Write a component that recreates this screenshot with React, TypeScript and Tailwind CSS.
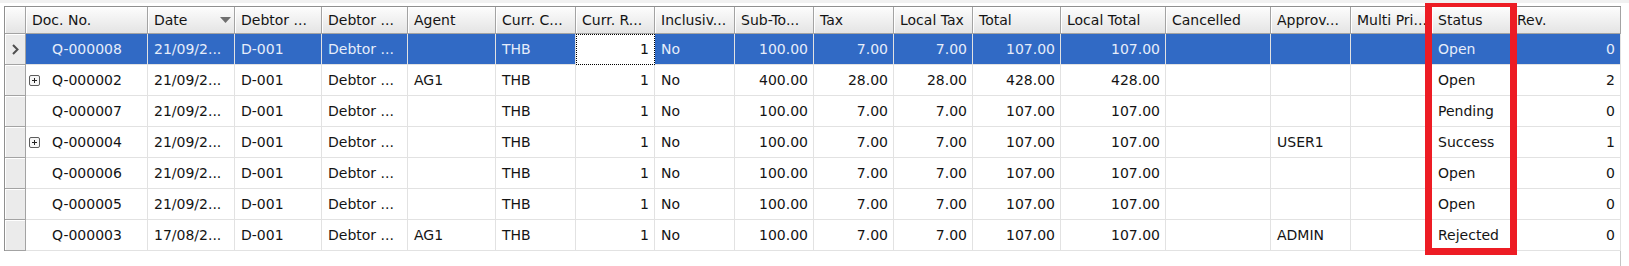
import React from "react"

type Row = {
  doc: string
  date: string
  agent: string
  sub: string
  tax: string
  total: string
  approv: string
  status: string
  rev: string
  expand?: boolean
  selected?: boolean
}

const rows: Row[] = [
  { doc: "Q-000008", date: "21/09/2...", agent: "", sub: "100.00", tax: "7.00", total: "107.00", approv: "", status: "Open", rev: "0", selected: true },
  { doc: "Q-000002", date: "21/09/2...", agent: "AG1", sub: "400.00", tax: "28.00", total: "428.00", approv: "", status: "Open", rev: "2", expand: true },
  { doc: "Q-000007", date: "21/09/2...", agent: "", sub: "100.00", tax: "7.00", total: "107.00", approv: "", status: "Pending", rev: "0" },
  { doc: "Q-000004", date: "21/09/2...", agent: "", sub: "100.00", tax: "7.00", total: "107.00", approv: "USER1", status: "Success", rev: "1", expand: true },
  { doc: "Q-000006", date: "21/09/2...", agent: "", sub: "100.00", tax: "7.00", total: "107.00", approv: "", status: "Open", rev: "0" },
  { doc: "Q-000005", date: "21/09/2...", agent: "", sub: "100.00", tax: "7.00", total: "107.00", approv: "", status: "Open", rev: "0" },
  { doc: "Q-000003", date: "17/08/2...", agent: "AG1", sub: "100.00", tax: "7.00", total: "107.00", approv: "ADMIN", status: "Rejected", rev: "0" },
]

const COLS =
  "grid grid-cols-[21px_122px_87px_87px_86px_88px_80px_79px_80px_79px_80px_79px_88px_105px_105px_80px_81px_79px_110px]"

const headers = [
  "Doc. No.",
  "Date",
  "Debtor ...",
  "Debtor ...",
  "Agent",
  "Curr. C...",
  "Curr. R...",
  "Inclusiv...",
  "Sub-To...",
  "Tax",
  "Local Tax",
  "Total",
  "Local Total",
  "Cancelled",
  "Approv...",
  "Multi Pri...",
  "Status",
  "Rev.",
]

const headCell =
  "flex items-center h-[27px] bg-linear-to-b from-[#fdfdfd] to-[#e4e4e4] border-r border-b border-[#a3a3a3] shadow-[inset_1px_1px_0_#ffffff] overflow-hidden whitespace-nowrap"

const PlusBox = () => (
  <svg width="11" height="11" viewBox="0 0 11 11" className="shrink-0">
    <rect x="0.5" y="0.5" width="10" height="10" rx="1.5" fill="#f6f6f6" stroke="#5c5c5c" />
    <path d="M3 5.5h5M5.5 3v5" stroke="#222" strokeWidth="1" />
  </svg>
)

const Cell = ({ children, right, sel }: { children?: React.ReactNode; right?: boolean; sel?: boolean }) => (
  <div
    className={
      right
        ? "flex items-center justify-end pr-[5px] border-r border-b border-[#e2e2e2] overflow-hidden whitespace-nowrap"
        : "flex items-center pl-[6px] border-r border-b border-[#e2e2e2] overflow-hidden whitespace-nowrap"
    }
  >
    {children}
  </div>
)

export default function App() {
  return (
    <div className="relative w-[1629px] h-[266px] bg-white text-[14px] text-[#141414] font-['DejaVu_Sans',sans-serif] overflow-hidden">
      <div className="h-[3px] bg-[#f1f1f1]" />
      <div className="pl-[4px] pt-[3px] h-[263px]">
        <div className="flex flex-col w-[1617px] h-full">
          <div className={COLS + " border-l border-t border-[#8f8f8f]"}>
            <div className={headCell} />
            {headers.map((h, i) =>
              i === 1 ? (
                <div key={i} className={headCell + " justify-between pl-[6px] pr-[3px]"}>
                  <span>{h}</span>
                  <svg width="11" height="6" viewBox="0 0 11 6">
                    <path d="M0 0h11L5.5 6z" fill="#6f6f6f" />
                  </svg>
                </div>
              ) : (
                <div key={i} className={headCell + " pl-[6px]"}>
                  {h}
                </div>
              )
            )}
          </div>

          {rows.map((r, idx) => (
            <div
              key={idx}
              className={
                COLS +
                " h-[31px] border-l border-[#8f8f8f] " +
                (r.selected ? "bg-[#316ac5] text-[#e6edfa]" : "bg-white")
              }
            >
              <div className="flex items-center justify-center bg-[#ebebeb] border-r border-b border-[#a3a3a3] shadow-[inset_1px_1px_0_#ffffff]">
                {r.selected && (
                  <svg width="7" height="11" viewBox="0 0 7 11">
                    <path d="M1 1l4.5 4.5L1 10" fill="none" stroke="#4f4f4f" strokeWidth="2" />
                  </svg>
                )}
              </div>
              <div className="flex items-center gap-[12px] pl-[3px] border-r border-b border-[#e2e2e2] whitespace-nowrap overflow-hidden">
                {r.expand ? <PlusBox /> : <span className="w-[11px] shrink-0" />}
                <span>{r.doc}</span>
              </div>
              <Cell>{r.date}</Cell>
              <Cell>D-001</Cell>
              <Cell>Debtor ...</Cell>
              <Cell>{r.agent}</Cell>
              <Cell>THB</Cell>
              {r.selected ? (
                <div className="flex items-center justify-end pr-[5px] bg-white text-[#111] border border-dotted border-black">
                  1
                </div>
              ) : (
                <Cell right>1</Cell>
              )}
              <Cell>No</Cell>
              <Cell right>{r.sub}</Cell>
              <Cell right>{r.tax}</Cell>
              <Cell right>{r.tax}</Cell>
              <Cell right>{r.total}</Cell>
              <Cell right>{r.total}</Cell>
              <Cell />
              <Cell>{r.approv}</Cell>
              <Cell />
              <Cell>{r.status}</Cell>
              <Cell right>{r.rev}</Cell>
            </div>
          ))}

          <div className="flex-1 border-r border-[#c4c4c4]" />
        </div>
      </div>

      <div className="absolute left-[1425px] top-[3px] w-[92px] h-[252px] border-x-[7px] border-b-[7px] border-t-[4px] border-[#ed1c24]" />
    </div>
  )
}
